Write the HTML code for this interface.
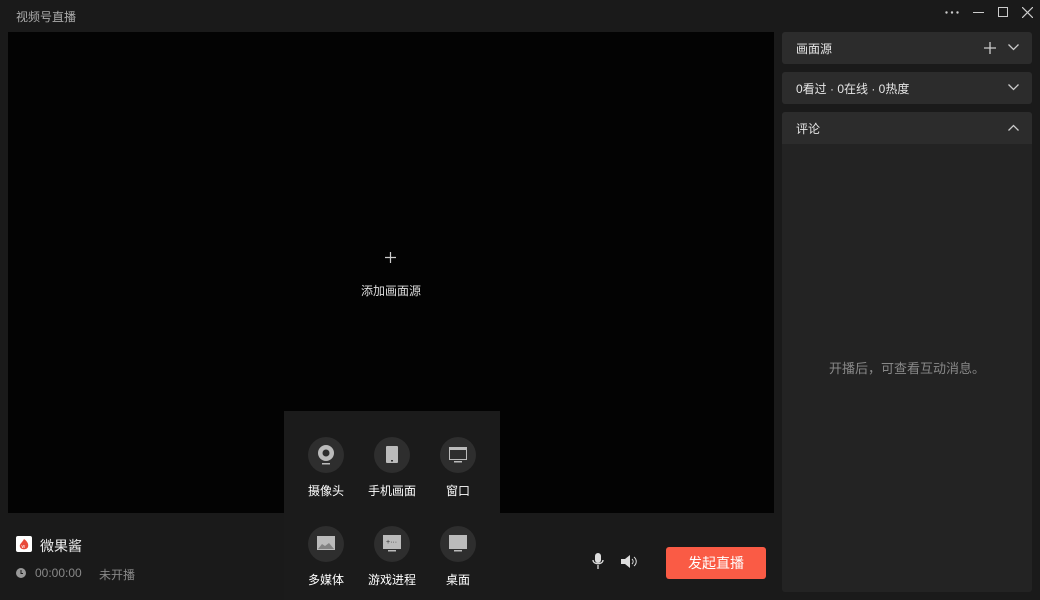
<!DOCTYPE html><html><head><meta charset="utf-8"><style>
*{margin:0;padding:0;box-sizing:border-box}
body{width:1040px;height:600px;background:#1a1a1a;font-family:"Liberation Sans","Noto Sans CJK SC",sans-serif;color:#e6e6e6;position:relative;overflow:hidden;font-size:13px}
.a{position:absolute}
.panel{position:absolute;left:782px;width:250px;background:#2c2c2c;border-radius:3px}
.ic{position:absolute;width:36px;height:36px;border-radius:50%;background:#2e2e2e}
.lb{position:absolute;width:70px;text-align:center;font-size:12px;color:#fff}
</style></head><body>
<div class="a" style="left:16px;top:8px;font-size:12px;color:#aaa">视频号直播</div>
<svg class="a" style="left:945px;top:11px" width="14" height="3"><circle cx="1.5" cy="1.5" r="1.2" fill="#ccc"/><circle cx="7" cy="1.5" r="1.2" fill="#ccc"/><circle cx="12.5" cy="1.5" r="1.2" fill="#ccc"/></svg>
<div class="a" style="left:973px;top:12px;width:11px;height:1px;background:#ccc"></div>
<div class="a" style="left:998px;top:7px;width:10px;height:10px;border:1px solid #ccc"></div>
<svg class="a" style="left:1022px;top:7px" width="11" height="11"><path d="M0 0L11 11M11 0L0 11" stroke="#ccc" stroke-width="1.2"/></svg>
<div class="a" style="left:8px;top:32px;width:766px;height:481px;background:#030303"></div>
<svg class="a" style="left:385px;top:252px" width="11" height="11"><path d="M5.5 0V11M0 5.5H11" stroke="#ccc" stroke-width="1.2"/></svg>
<div class="a" style="left:361px;top:282px;font-size:12px;color:#ddd">添加画面源</div>
<div class="a" style="left:284px;top:411px;width:216px;height:189px;background:#1b1b1b"></div>
<div class="ic" style="left:308px;top:437px"><svg width="36" height="36"><circle cx="18" cy="16" r="8" fill="#bbb"/><circle cx="18" cy="16" r="3.5" fill="#2e2e2e"/><rect x="14" y="26" width="8" height="1.5" fill="#bbb"/></svg></div>
<div class="ic" style="left:374px;top:437px"><svg width="36" height="36"><rect x="12" y="9" width="12" height="17" rx="1" fill="#bbb"/><rect x="17" y="23" width="2" height="1.5" fill="#2e2e2e"/></svg></div>
<div class="ic" style="left:440px;top:437px"><svg width="36" height="36"><rect x="9.5" y="10.5" width="17" height="12" fill="none" stroke="#bbb"/><rect x="9" y="10" width="18" height="3" fill="#bbb"/><rect x="14" y="24" width="8" height="1.5" fill="#bbb"/></svg></div>
<div class="lb" style="left:291px;top:482px">摄像头</div>
<div class="lb" style="left:357px;top:482px">手机画面</div>
<div class="lb" style="left:423px;top:482px">窗口</div>
<div class="ic" style="left:308px;top:526px"><svg width="36" height="36"><rect x="9" y="10" width="18" height="14" fill="#bbb"/><path d="M10 23L14 18L17 20L21 17L26 23Z" fill="#2e2e2e" opacity=".4"/></svg></div>
<div class="ic" style="left:374px;top:526px"><svg width="36" height="36"><rect x="9" y="9" width="18" height="14" fill="#bbb"/><text x="12" y="18" font-size="7" fill="#2e2e2e">+···</text><rect x="14" y="24" width="8" height="1.5" fill="#bbb"/></svg></div>
<div class="ic" style="left:440px;top:526px"><svg width="36" height="36"><rect x="9" y="9" width="18" height="14" fill="#bbb"/><rect x="14" y="24" width="8" height="1.5" fill="#bbb"/></svg></div>
<div class="lb" style="left:291px;top:571px">多媒体</div>
<div class="lb" style="left:357px;top:571px">游戏进程</div>
<div class="lb" style="left:423px;top:571px">桌面</div>
<div class="a" style="left:16px;top:536px;width:16px;height:16px;background:#fff;border-radius:2px"><svg width="16" height="16"><path d="M8 3C11 5 13 8 12 11C11 14 5 14 4 11C3 8 6 7 8 3Z" fill="#e84a3a"/><text x="5.5" y="12" font-size="5" fill="#fff">w</text></svg></div>
<div class="a" style="left:40px;top:536px;font-size:14px;color:#eee">微果酱</div>
<svg class="a" style="left:16px;top:568px" width="10" height="10"><circle cx="5" cy="5" r="5" fill="#999"/><path d="M5 2V5.5H7" stroke="#1a1a1a" fill="none"/></svg>
<div class="a" style="left:35px;top:566px;font-size:12px;color:#888">00:00:00</div>
<div class="a" style="left:99px;top:566px;font-size:12px;color:#888">未开播</div>
<svg class="a" style="left:592px;top:553px" width="12" height="17"><rect x="3" y="0" width="6" height="10" rx="3" fill="#ddd"/><path d="M1 7C1 12 11 12 11 7M6 12V16" stroke="#ddd" fill="none" stroke-width="1.3"/></svg>
<svg class="a" style="left:621px;top:555px" width="17" height="13"><path d="M0 4H4L9 0V13L4 9H0Z" fill="#ddd"/><path d="M11 4C12.5 5.5 12.5 7.5 11 9M13 2C16 4.5 16 8.5 13 11" stroke="#ddd" fill="none"/></svg>
<div class="a" style="left:666px;top:547px;width:100px;height:32px;background:#fa5b45;border-radius:3px;color:#fff;font-size:14px;text-align:center;line-height:32px">发起直播</div>
<div class="panel" style="top:32px;height:32px"><span class="a" style="left:14px;top:8px;font-size:12px">画面源</span>
<svg class="a" style="left:202px;top:10px" width="12" height="12"><path d="M6 0V12M0 6H12" stroke="#ccc" stroke-width="1.3"/></svg>
<svg class="a" style="left:226px;top:12px" width="11" height="7"><path d="M0.5 0.5L5.5 5.5L10.5 0.5" stroke="#ccc" fill="none" stroke-width="1.3"/></svg></div>
<div class="panel" style="top:72px;height:32px"><span class="a" style="left:14px;top:8px;font-size:12px">0看过 · 0在线 · 0热度</span>
<svg class="a" style="left:226px;top:12px" width="11" height="7"><path d="M0.5 0.5L5.5 5.5L10.5 0.5" stroke="#ccc" fill="none" stroke-width="1.3"/></svg></div>
<div class="panel" style="top:112px;height:480px;background:#232323"><div class="a" style="left:0;top:0;width:250px;height:32px;background:#2c2c2c;border-radius:3px 3px 0 0"></div><span class="a" style="left:14px;top:8px;font-size:12px">评论</span>
<svg class="a" style="left:226px;top:12px" width="11" height="7"><path d="M0.5 6.5L5.5 1.5L10.5 6.5" stroke="#ccc" fill="none" stroke-width="1.3"/></svg>
<div class="a" style="left:0;width:250px;top:246px;text-align:center;font-size:13px;color:#888">开播后，可查看互动消息。</div></div>
</body></html>
